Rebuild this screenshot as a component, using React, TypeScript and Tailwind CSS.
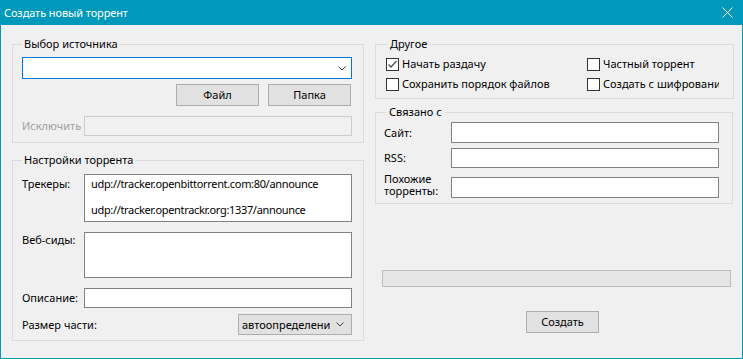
import React from "react";

function Chevron() {
  return (
    <svg width="8" height="5" viewBox="0 0 8 5" className="block shrink-0">
      <polyline points="0.5,0.5 4,4 7.5,0.5" fill="none" stroke="#404040" strokeWidth="1" />
    </svg>
  );
}

function Checkbox({ checked }: { checked?: boolean }) {
  return (
    <span className="w-[13px] h-[13px] border border-[#333333] bg-white flex items-center justify-center shrink-0">
      {checked && (
        <svg width="11" height="11" viewBox="0 0 11 11" className="block">
          <polyline points="1.5,5.5 4,8 9.5,2" fill="none" stroke="#505050" strokeWidth="1.3" />
        </svg>
      )}
    </span>
  );
}

function CheckItem({ label, checked, clip }: { label: string; checked?: boolean; clip?: boolean }) {
  return (
    <div className="flex items-center h-[16px] gap-[3px] min-w-0">
      <Checkbox checked={checked} />
      <span className={"whitespace-nowrap " + (clip ? "overflow-hidden" : "")}>{label}</span>
    </div>
  );
}

export default function App() {
  return (
    <div className="w-[743px] h-[359px] bg-[#0099bc] flex flex-col font-['Noto_Sans',sans-serif] text-[11px] leading-[16px] text-black">
      {/* Title bar */}
      <div className="h-[25px] shrink-0 flex items-center justify-between pl-[4px] pr-[10px] text-white">
        <span className="text-[11px] tracking-[-0.1px]">Создать новый торрент</span>
        <svg width="11" height="11" viewBox="0 0 11 11" className="block">
          <line x1="0.5" y1="0.5" x2="10.5" y2="10.5" stroke="white" strokeWidth="1" />
          <line x1="10.5" y1="0.5" x2="0.5" y2="10.5" stroke="white" strokeWidth="1" />
        </svg>
      </div>

      {/* Body */}
      <div className="flex-1 mx-[1px] mb-[1px] bg-[#f0f0f0] flex pt-[11px] pl-[11px] gap-[11px]">
        {/* Left column */}
        <div className="w-[352px] flex flex-col">
          <fieldset className="border border-[#dcdcdc] pl-[9px] pr-[11px] pb-[6px]">
            <legend className="px-[2px] leading-[16px]">Выбор источника</legend>
            <div className="mt-[5px] h-[22px] border border-[#0078d7] bg-white flex items-center justify-end pr-[5px]">
              <Chevron />
            </div>
            <div className="mt-[5px] flex justify-end gap-[9px] pr-[1px]">
              <div className="w-[83px] h-[22px] border border-[#adadad] bg-[#e1e1e1] flex items-center justify-center">Файл</div>
              <div className="w-[83px] h-[22px] border border-[#adadad] bg-[#e1e1e1] flex items-center justify-center">Папка</div>
            </div>
            <div className="mt-[10px] flex items-center">
              <span className="w-[62px] text-[#a0a0a0]">Исключить</span>
              <div className="flex-1 h-[20px] border border-[#cccccc] bg-[#f0f0f0]" />
            </div>
          </fieldset>

          <fieldset className="mt-[9px] border border-[#dcdcdc] pl-[9px] pr-[11px] pb-[5px]">
            <legend className="px-[2px] leading-[16px]">Настройки торрента</legend>
            <div className="mt-[6px] flex">
              <span className="w-[62px] mt-[2px]">Трекеры:</span>
              <div className="flex-1 h-[48px] border border-[#828282] bg-white pl-[6px] pt-[1px] flex flex-col tracking-[-0.33px]">
                <div className="leading-[16px]">udp://tracker.openbittorrent.com:80/announce</div>
                <div className="leading-[16px] mt-[10px]">udp://tracker.opentrackr.org:1337/announce</div>
              </div>
            </div>
            <div className="mt-[10px] flex">
              <span className="w-[62px]">Веб-сиды:</span>
              <div className="flex-1 h-[46px] border border-[#828282] bg-white" />
            </div>
            <div className="mt-[10px] flex items-center">
              <span className="w-[62px]">Описание:</span>
              <div className="flex-1 h-[20px] border border-[#828282] bg-white" />
            </div>
            <div className="mt-[6px] flex items-center justify-between">
              <span>Размер части:</span>
              <div className="w-[114px] h-[21px] border border-[#adadad] bg-[#e1e1e1] flex items-center pl-[3px] pr-[5px] gap-[6px]">
                <span className="w-[88px] overflow-hidden whitespace-nowrap">автоопределение</span>
                <Chevron />
              </div>
            </div>
          </fieldset>
        </div>

        {/* Right column */}
        <div className="w-[359px] flex flex-col">
          <fieldset className="border border-[#dcdcdc] pl-[10px] pr-[14px] pb-[6px]">
            <legend className="ml-[1px] px-[3px] leading-[16px]">Другое</legend>
            <div className="mt-[4px] grid grid-cols-[201px_1fr] gap-y-[4px]">
              <CheckItem label="Начать раздачу" checked />
              <CheckItem label="Частный торрент" />
              <CheckItem label="Сохранить порядок файлов" />
              <CheckItem label="Создать с шифрованием" clip />
            </div>
          </fieldset>

          <fieldset className="mt-[5px] w-[358px] border border-[#dcdcdc] pl-[8px] pr-[13px] pb-[5px]">
            <legend className="ml-[2px] px-[3px] leading-[16px]">Связано с</legend>
            <div className="mt-[2px] flex items-center">
              <span className="w-[67px]">Сайт:</span>
              <div className="flex-1 h-[21px] border border-[#828282] bg-white" />
            </div>
            <div className="mt-[5px] flex items-center">
              <span className="w-[67px]">RSS:</span>
              <div className="flex-1 h-[20px] border border-[#828282] bg-white" />
            </div>
            <div className="mt-[9px] flex items-start">
              <span className="w-[67px] leading-[12px] -mt-[4px]">Похожие<br />торренты:</span>
              <div className="flex-1 h-[21px] border border-[#828282] bg-white" />
            </div>
          </fieldset>

          <div className="mt-[66px] ml-[7px] w-[349px] h-[17px] border border-[#bcbcbc] bg-[#e6e6e6]" />
          <div className="mt-[24px] ml-[151px] w-[73px] h-[22px] border border-[#adadad] bg-[#e1e1e1] flex items-center justify-center">Создать</div>
        </div>
      </div>
    </div>
  );
}
